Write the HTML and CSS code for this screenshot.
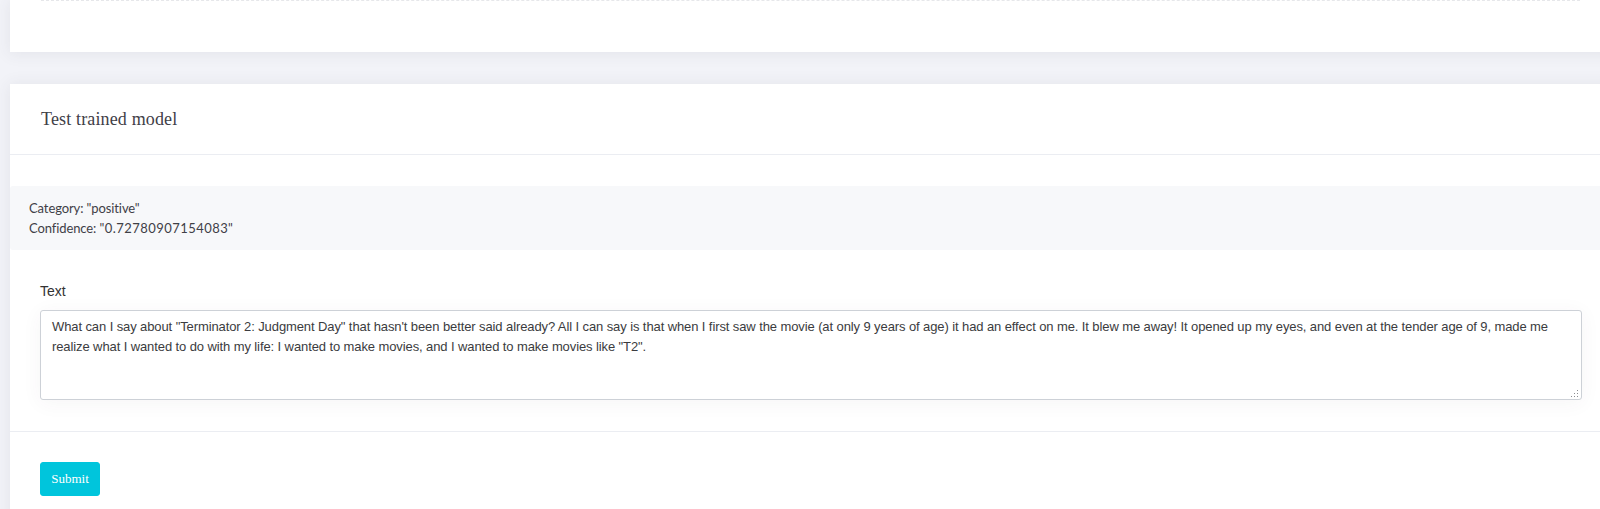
FILE: index.html
```html
<!DOCTYPE html>
<html lang="en">
<head>
<meta charset="utf-8">
<title>Test trained model</title>
<link rel="stylesheet" href="styles.css">
</head>
<body>
<div class="page">
  <section class="card card-top">
    <div class="dashed"></div>
  </section>
  <section class="card">
    <header class="card-head">
      <h3 class="card-title">Test trained model</h3>
    </header>
    <div class="card-body">
      <div class="result">
        <div>Category: "positive"</div>
        <div>Confidence: <span class="num">"0.72780907154083"</span></div>
      </div>
      <div class="form-group">
        <label class="label" for="txt">Text</label>
        <div class="field">
          <textarea id="txt" class="input">What can I say about "Terminator 2: Judgment Day" that hasn't been better said already? All I can say is that when I first saw the movie (at only 9 years of age) it had an effect on me. It blew me away! It opened up my eyes, and even at the tender age of 9, made me realize what I wanted to do with my life: I wanted to make movies, and I wanted to make movies like "T2".</textarea>
          <svg class="grip" width="9" height="9" viewBox="0 0 9 9" aria-hidden="true">
            <rect x="7" y="1" width="1" height="1"/>
            <rect x="4" y="4" width="1" height="1"/>
            <rect x="7" y="4" width="1" height="1"/>
            <rect x="1" y="7" width="1" height="1"/>
            <rect x="4" y="7" width="1" height="1"/>
            <rect x="7" y="7" width="1" height="1"/>
          </svg>
        </div>
      </div>
    </div>
    <footer class="card-foot">
      <button class="btn" type="button">Submit</button>
    </footer>
  </section>
</div>
</body>
</html>
```

FILE: styles.css
```css
html, body {
  margin: 0;
  padding: 0;
}
body {
  background: #f2f3f8;
  overflow: hidden;
  width: 1600px;
  height: 509px;
}
.page {
  width: 1602px;
  margin-left: 10px;
  display: flex;
  flex-direction: column;
  gap: 32px;
}
.card {
  background: #fff;
  box-shadow: 0 1px 15px 1px rgba(69, 65, 78, 0.08);
}
.card-top {
  padding: 0 32px 0 31px;
}
.dashed {
  height: 51px;
  border-top: 1px dashed #e6e7ea;
}
.card-head {
  height: 70px;
  border-bottom: 1px solid #ebedf2;
  padding: 0 31px;
  display: flex;
  align-items: center;
}
.card-title {
  margin: 0;
  font-family: "Liberation Serif", serif;
  font-size: 18px;
  letter-spacing: 0.15px;
  font-weight: normal;
  color: #3f4047;
}
.card-body {
  padding: 31px 0 31px;
}
.result {
  background: #f7f8fa;
  border-radius: 3px 0 0 3px;
  padding: 12px 19px;
  font-family: Lato, sans-serif;
  font-size: 13px;
  letter-spacing: -0.1px;
  line-height: 20px;
  color: #3f4047;
}
.num {
  letter-spacing: 0.45px;
}
.form-group {
  padding: 31px 30px 0;
}
.label {
  display: block;
  font-family: "Liberation Sans", Arial, sans-serif;
  font-size: 14px;
  line-height: 20px;
  color: #333;
  margin-bottom: 9px;
}
.field {
  position: relative;
}
.input {
  display: block;
  box-sizing: border-box;
  width: 100%;
  height: 90px;
  margin: 0;
  padding: 6px 11px;
  border: 1px solid #cdd1d7;
  border-radius: 3px;
  font-family: "Liberation Sans", Arial, sans-serif;
  font-size: 13px;
  letter-spacing: -0.1px;
  line-height: 20px;
  color: #3b3c40;
  background: #fff;
  box-shadow: 0 3px 20px 0 rgba(69, 65, 78, 0.05);
  resize: none;
}
.grip {
  position: absolute;
  right: 3px;
  bottom: 2px;
  fill: #8a8c90;
}
.card-foot {
  border-top: 1px solid #ebedf2;
  padding: 30px 30px 30px;
}
.btn {
  display: block;
  height: 34px;
  width: 60px;
  padding: 0;
  border: 1px solid #00c5dc;
  border-radius: 3px;
  background: #00c5dc;
  color: #fff;
  font-family: "Liberation Serif", serif;
  font-size: 13px;
}
```
